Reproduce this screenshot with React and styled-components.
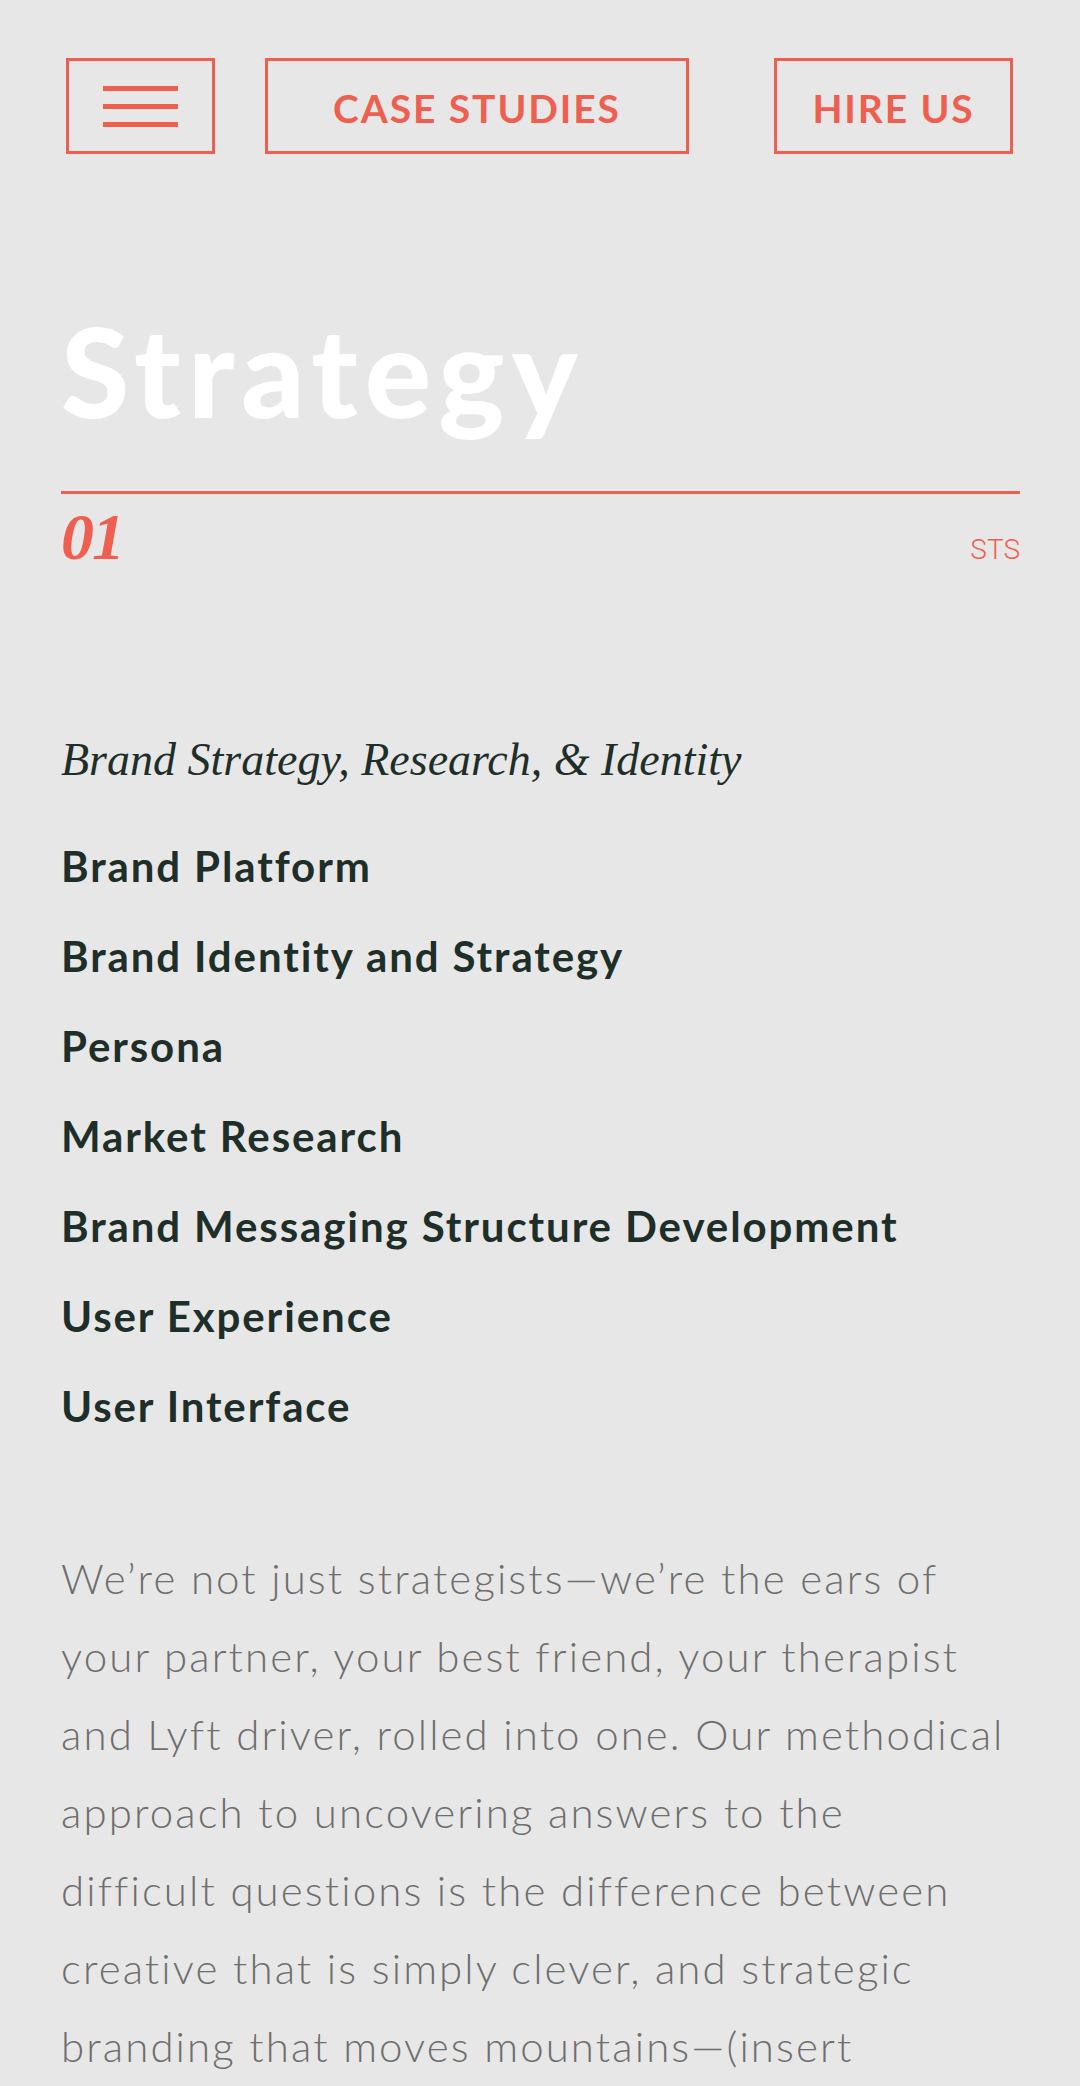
import React from 'react'
import styled, { createGlobalStyle } from 'styled-components'

const coral = '#ef5f4f'

const GlobalStyle = createGlobalStyle`
  html, body {
    margin: 0;
    padding: 0;
    background-color: #e7e7e7;
  }
  * {
    box-sizing: border-box;
  }
`

const Page = styled.div`
  width: 1080px;
  min-height: 2086px;
  background-color: #e7e7e7;
  font-family: Lato, 'Open Sans', sans-serif;
`

const Header = styled.header`
  display: flex;
  flex-direction: row;
  align-items: center;
  gap: 50px;
  padding: 58px 67px 0 66px;
`

const OutlineButton = styled.button`
  display: flex;
  align-items: center;
  justify-content: center;
  height: 96px;
  width: ${(p) => p.$width}px;
  margin-left: ${(p) => (p.$pushRight ? 'auto' : '0')};
  background: transparent;
  border: 3px solid ${coral};
  color: ${coral};
  font-family: Lato, sans-serif;
  font-weight: 700;
  font-size: 39px;
  letter-spacing: 1.9px;
  text-transform: uppercase;
  padding: 4px 0 0;
  cursor: pointer;
`

const Burger = styled.span`
  display: flex;
  flex-direction: column;
  gap: 13px;
  width: 75px;
  margin-top: -4px;
`

const BurgerLine = styled.span`
  display: block;
  height: 5px;
  background-color: ${coral};
`

const Main = styled.main`
  padding: 0 60px 0 61px;
`

const Title = styled.h1`
  margin: 156px 0 0;
  font-family: Lato, sans-serif;
  font-weight: 900;
  font-size: 124px;
  line-height: 120px;
  color: #ffffff;
  letter-spacing: 7.3px;
`

const Rule = styled.hr`
  margin: 61px 0 0;
  border: none;
  height: 3px;
  background-color: ${coral};
`

const MetaRow = styled.div`
  display: flex;
  flex-direction: row;
  align-items: baseline;
  justify-content: space-between;
  margin-top: 10px;
`

const Number = styled.span`
  font-family: 'Liberation Serif', serif;
  font-style: italic;
  font-weight: 700;
  font-size: 66px;
  line-height: 66px;
  letter-spacing: -2px;
  color: ${coral};
`

const Code = styled.span`
  font-family: Roboto, 'Liberation Sans', sans-serif;
  font-weight: 300;
  font-size: 28px;
  color: ${coral};
`

const Subtitle = styled.h2`
  margin: 163px 0 0;
  font-family: 'Liberation Serif', serif;
  font-style: italic;
  font-weight: 400;
  font-size: 46px;
  line-height: 54px;
  color: #1e2e28;
`

const ServiceList = styled.ul`
  list-style: none;
  margin: 34px 0 0;
  padding: 0;
`

const ServiceItem = styled.li`
  font-family: Lato, sans-serif;
  font-weight: 700;
  font-size: 42px;
  line-height: 90px;
  letter-spacing: 1.9px;
  color: #1e2e28;
`

const Body = styled.p`
  max-width: 946px;
  margin: 88px 0 0;
  font-family: Lato, sans-serif;
  font-weight: 300;
  font-size: 42px;
  line-height: 78px;
  letter-spacing: 2.1px;
  color: #6e6e6e;
`

const services = [
  'Brand Platform',
  'Brand Identity and Strategy',
  'Persona',
  'Market Research',
  'Brand Messaging Structure Development',
  'User Experience',
  'User Interface',
]

function App() {
  return (
    <Page>
      <GlobalStyle />
      <Header>
        <OutlineButton $width={149} aria-label='Menu'>
          <Burger>
            <BurgerLine />
            <BurgerLine />
            <BurgerLine />
          </Burger>
        </OutlineButton>
        <OutlineButton $width={424}>Case Studies</OutlineButton>
        <OutlineButton $width={239} $pushRight>
          Hire Us
        </OutlineButton>
      </Header>
      <Main>
        <Title>Strategy</Title>
        <Rule />
        <MetaRow>
          <Number>01</Number>
          <Code>STS</Code>
        </MetaRow>
        <Subtitle>Brand Strategy, Research, &amp; Identity</Subtitle>
        <ServiceList>
          {services.map((s) => (
            <ServiceItem key={s}>{s}</ServiceItem>
          ))}
        </ServiceList>
        <Body>
          We’re not just strategists—we’re the ears of your partner, your best
          friend, your therapist and Lyft driver, rolled into one. Our
          methodical approach to uncovering answers to the difficult questions
          is the difference between creative that is simply clever, and
          strategic branding that moves mountains—(insert applause here).
        </Body>
      </Main>
    </Page>
  )
}

export default App
